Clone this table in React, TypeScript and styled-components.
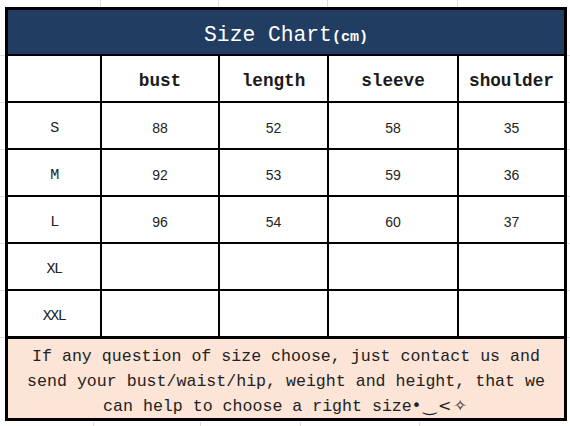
import React from 'react';
import styled, { createGlobalStyle } from 'styled-components';

const GlobalStyle = createGlobalStyle`
  html, body {
    margin: 0;
    padding: 0;
    background: #fff;
  }
  body {
    font-family: 'Liberation Mono', 'DejaVu Sans Mono', monospace;
  }
`;

// faint spreadsheet gridlines peeking out around the chart
const gridLine = '#dcdcdc';
const topCols = [100, 218, 327, 457];
const bottomCols = [93, 200, 300, 419];
const sideRows = [55, 102, 149, 196, 243, 290, 337];

const sheetLines = [
  ...topCols.map((x) => `linear-gradient(${gridLine}, ${gridLine}) ${x}px 0 / 1px 7px no-repeat`),
  ...bottomCols.map((x) => `linear-gradient(${gridLine}, ${gridLine}) ${x}px 422px / 1px 4px no-repeat`),
  ...sideRows.map((y) => `linear-gradient(${gridLine}, ${gridLine}) 0 ${y}px / 5px 1px no-repeat`),
  ...sideRows.map((y) => `linear-gradient(${gridLine}, ${gridLine}) 567px ${y}px / 3px 1px no-repeat`),
].join(', ');

const columns = ['bust', 'length', 'sleeve', 'shoulder'];

const rows: { size: string; values: string[] }[] = [
  { size: 'S', values: ['88', '52', '58', '35'] },
  { size: 'M', values: ['92', '53', '59', '36'] },
  { size: 'L', values: ['96', '54', '60', '37'] },
  { size: 'XL', values: ['', '', '', ''] },
  { size: 'XXL', values: ['', '', '', ''] },
];

const App = () => (
  <>
    <GlobalStyle />
    <Sheet>
      <Chart>
        <TitleCell>
          <span>Size Chart</span>
          <Unit>(cm)</Unit>
        </TitleCell>

        <Cell />
        {columns.map((c) => (
          <HeadCell key={c}>{c}</HeadCell>
        ))}

        {rows.map((row) => (
          <React.Fragment key={row.size}>
            <SizeCell>{row.size}</SizeCell>
            {row.values.map((v, i) => (
              <NumCell key={i}>{v}</NumCell>
            ))}
          </React.Fragment>
        ))}

        <NoteCell>
          <NoteText>
            If any question of size choose, just contact us and
            <br />
            send your bust/waist/hip, weight and height, that we
            <br />
            can help to choose a right size
            <Face>•‿&lt;✧</Face>
          </NoteText>
        </NoteCell>
      </Chart>
    </Sheet>
  </>
);

const Sheet = styled.div`
  width: 570px;
  height: 426px;
  box-sizing: border-box;
  padding: 7px 3px 4px 5px;
  background: ${sheetLines}, #fff;
`;

const Chart = styled.div`
  display: grid;
  grid-template-columns: 92px 116px 107px 128px 105px;
  grid-template-rows: 44px repeat(6, 45px) 80px;
  gap: 2px;
  width: fit-content;
  background: #000;
  border: 3px solid #000;
`;

const Cell = styled.div`
  display: flex;
  align-items: center;
  justify-content: center;
  background: #fff;
  color: #111;
`;

const TitleCell = styled(Cell)`
  grid-column: 1 / -1;
  align-items: baseline;
  padding-top: 13px;
  box-sizing: border-box;
  background: #213d62;
  color: #fff;
  font-size: 21.3px;
  white-space: pre;
`;

const Unit = styled.span`
  font-size: 15px;
  font-weight: bold;
`;

const HeadCell = styled(Cell)`
  padding-top: 5px;
  font-size: 17.7px;
  font-weight: bold;
  color: #1a1a1a;
`;

const SizeCell = styled(Cell)`
  padding-top: 5px;
  font-size: 15px;
  letter-spacing: -1.5px;
  color: #222;
`;

const NumCell = styled(Cell)`
  padding-top: 4px;
  font-family: 'Liberation Sans', Arial, sans-serif;
  font-size: 14px;
  color: #222;
`;

const NoteCell = styled(Cell)`
  grid-column: 1 / -1;
  border-top: 1px solid #000;
  padding-top: 8px;
  background: #fce4d6;
`;

const NoteText = styled.p`
  margin: 0;
  color: #222;
  font-size: 16.6px;
  line-height: 24.5px;
  text-align: center;
  white-space: nowrap;
`;

const Face = styled.span`
  font-family: 'DejaVu Sans', sans-serif;
  font-size: 16px;
  letter-spacing: 2px;
`;

export default App;
